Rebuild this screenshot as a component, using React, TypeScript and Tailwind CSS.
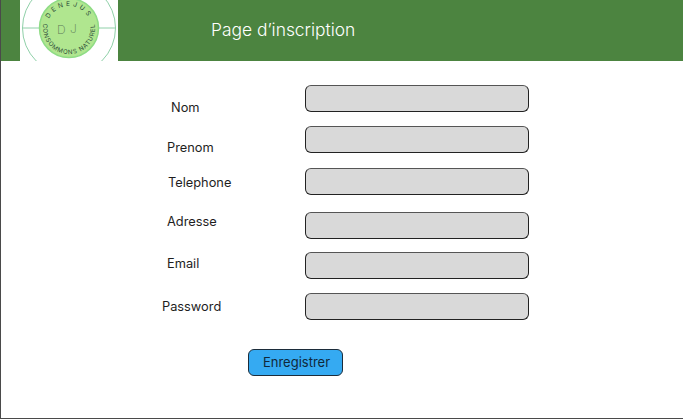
const fields = [
  { name: "Nom", row: "mt-0", label: "pl-[171px] pt-[15px]" },
  { name: "Prenom", row: "mt-[14px]", label: "pl-[167px] pt-[14px]" },
  { name: "Telephone", row: "mt-[15px]", label: "pl-[168px] pt-[7px]" },
  { name: "Adresse", row: "mt-[17px]", label: "pl-[167px] pt-[2px]" },
  { name: "Email", row: "mt-[13px]", label: "pl-[167px] pt-[4px]" },
  { name: "Password", row: "mt-[14px]", label: "pl-[162px] pt-[6px]" },
];

function Logo() {
  return (
    <svg width="98" height="61" viewBox="0 0 98 61" className="block">
      <circle cx="49" cy="28" r="46.5" fill="none" stroke="#8fd0a8" strokeWidth="1" />
      <line x1="2" y1="28" x2="20" y2="28" stroke="#8fd0a8" strokeWidth="1" />
      <line x1="78" y1="28" x2="96" y2="28" stroke="#8fd0a8" strokeWidth="1" />
      <circle cx="49" cy="28" r="29.5" fill="#b0e68f" stroke="#8fdc85" strokeWidth="1.5" />
      <defs>
        <path id="logo-top" d="M 27 28 A 22 22 0 0 1 71 28" />
        <path id="logo-bottom" d="M 24.6 19.1 A 26 26 0 1 0 73.4 19.1" />
      </defs>
      <text fontSize="6.5" fill="#2f4f3a" letterSpacing="2.8" fontFamily="Inter, sans-serif">
        <textPath href="#logo-top" startOffset="50%" textAnchor="middle">DENEJUS</textPath>
      </text>
      <text fontSize="6.1" fill="#2f4f3a" letterSpacing="0.8" fontFamily="Inter, sans-serif">
        <textPath href="#logo-bottom" startOffset="50%" textAnchor="middle">CONSOMMONS NATUREL</textPath>
      </text>
      <text x="37" y="34" fontSize="12" fill="#5c7a58" fontWeight="200" fontFamily="Inter, sans-serif">D</text>
      <text x="50" y="33" fontSize="12" fill="#5c7a58" fontWeight="200" fontFamily="Inter, sans-serif">J</text>
    </svg>
  );
}

export default function App() {
  return (
    <div className="h-[419px] w-[683px] overflow-hidden border-b border-l border-[#4a4a4a] bg-white font-['Inter',sans-serif]">
      <header className="flex h-[61px] items-center bg-[#4c8440] pl-[19px]">
        <div className="h-[61px] w-[98px] bg-white">
          <Logo />
        </div>
        <h1 className="ml-[93px] pb-[1px] text-[17.4px] font-light text-white">Page d’inscription</h1>
      </header>

      <main className="pt-[24px]">
        {fields.map((f) => (
          <div key={f.name} className={`flex h-[27px] ${f.row}`}>
            <div className={`w-[304px] shrink-0 text-[12.8px] leading-[16px] text-[#1e1e1e] ${f.label}`}>
              <span className="-ml-[1px]">{f.name}</span>
            </div>
            <div className="h-[27px] w-[224px] rounded-[6px] border border-[#222] border-t-[#555] bg-[#d9d9d9]" />
          </div>
        ))}
        <button className="ml-[247px] mt-[29px] h-[27px] w-[95px] rounded-[6px] border border-[#1c2c3a] bg-[#35aaf2] pl-[2px] text-[13px] text-[#10283a]">
          Enregistrer
        </button>
      </main>
    </div>
  );
}
